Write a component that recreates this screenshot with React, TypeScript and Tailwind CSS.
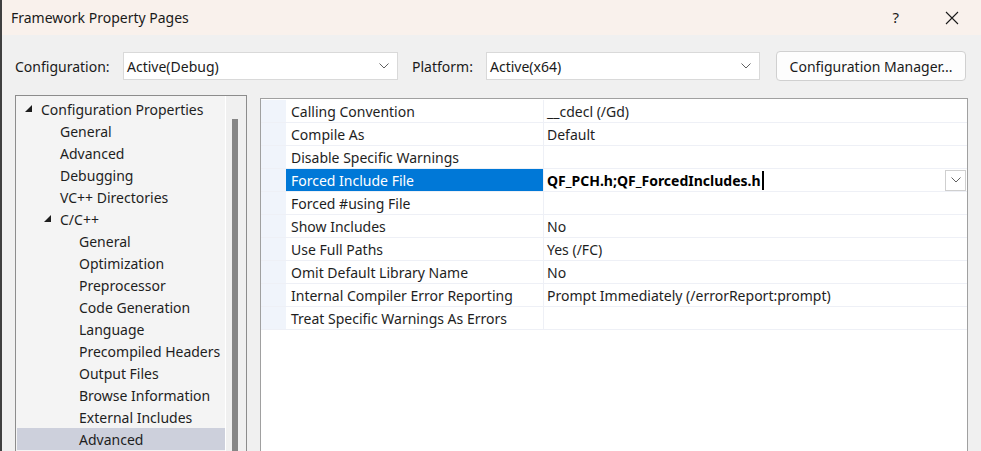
import React from 'react';

const font = { fontFamily: '"Noto Sans", "Segoe UI", sans-serif' };

interface TreeItem {
  label: string;
  level: number;
  expanded?: boolean;
  selected?: boolean;
}

const tree: TreeItem[] = [
  { label: 'Configuration Properties', level: 0, expanded: true },
  { label: 'General', level: 1 },
  { label: 'Advanced', level: 1 },
  { label: 'Debugging', level: 1 },
  { label: 'VC++ Directories', level: 1 },
  { label: 'C/C++', level: 1, expanded: true },
  { label: 'General', level: 2 },
  { label: 'Optimization', level: 2 },
  { label: 'Preprocessor', level: 2 },
  { label: 'Code Generation', level: 2 },
  { label: 'Language', level: 2 },
  { label: 'Precompiled Headers', level: 2 },
  { label: 'Output Files', level: 2 },
  { label: 'Browse Information', level: 2 },
  { label: 'External Includes', level: 2 },
  { label: 'Advanced', level: 2, selected: true },
];

const props: [string, string][] = [
  ['Calling Convention', '__cdecl (/Gd)'],
  ['Compile As', 'Default'],
  ['Disable Specific Warnings', ''],
  ['Forced Include File', 'QF_PCH.h;QF_ForcedIncludes.h'],
  ['Forced #using File', ''],
  ['Show Includes', 'No'],
  ['Use Full Paths', 'Yes (/FC)'],
  ['Omit Default Library Name', 'No'],
  ['Internal Compiler Error Reporting', 'Prompt Immediately (/errorReport:prompt)'],
  ['Treat Specific Warnings As Errors', ''],
];

function Chevron() {
  return (
    <svg width="10" height="6" viewBox="0 0 10 6">
      <path d="M0.5 0.5 L5 5 L9.5 0.5" fill="none" stroke="#606060" strokeWidth="1" />
    </svg>
  );
}

function Triangle() {
  return (
    <svg width="8" height="8" viewBox="0 0 8 8">
      <path d="M7 0 L7 7 L0 7 Z" fill="#1e1e1e" />
    </svg>
  );
}

function Combo({ value, width }: { value: string; width: string }) {
  return (
    <div
      className={`${width} h-[28px] bg-white border border-[#d9d9d9] flex items-center justify-between pl-[3px] pr-[8px] text-[14px] text-[#1a1a1a]`}
    >
      <span>{value}</span>
      <Chevron />
    </div>
  );
}

export default function App() {
  return (
    <div
      className="w-[981px] h-[451px] overflow-hidden bg-[#f0f0f0] border-l-2 border-[#404040] flex flex-col"
      style={font}
    >
      <div className="h-[35px] shrink-0 bg-[#f9f1ec] flex items-center pl-[9px] text-[14px] text-[#1a1a1a]">
        <span>Framework Property Pages</span>
        <span className="ml-auto mr-[46px] text-[15px]">?</span>
        <svg width="14" height="14" viewBox="0 0 14 14" className="mr-[22px]">
          <path d="M1 1 L13 13 M13 1 L1 13" stroke="#1a1a1a" strokeWidth="1.1" />
        </svg>
      </div>

      <div className="flex items-center mt-[16px] pl-[13px] h-[30px] shrink-0 text-[14px] text-[#1a1a1a]">
        <span className="w-[108px]">Configuration:</span>
        <Combo value="Active(Debug)" width="w-[275px]" />
        <span className="ml-[14px] w-[74px]">Platform:</span>
        <Combo value="Active(x64)" width="w-[274px]" />
        <button className="ml-[16px] w-[190px] h-[30px] bg-[#fdfdfd] border border-[#d0d0d0] rounded-[4px] text-[14px] text-[#1a1a1a]">
          Configuration Manager...
        </button>
      </div>

      <div className="flex flex-1 min-h-0">
        <div className="ml-[13px] mt-[14px] w-[232px] border-l border-t border-r border-[#8c8c8c] flex">
          <div className="w-[209px] bg-[#f4f4f4] pt-[2px] pl-[1px]">
            {tree.map((t, i) => (
              <div
                key={i}
                className={`h-[22px] flex items-center text-[14px] text-[#1e1e1e] ${t.selected ? 'bg-[#cdd0dc]' : ''}`}
                style={{ paddingLeft: 8 + t.level * 19 }}
              >
                <span className="w-[16px] shrink-0 flex items-center">{t.expanded ? <Triangle /> : null}</span>
                <span className="whitespace-nowrap">{t.label}</span>
              </div>
            ))}
          </div>
          <div className="flex-1 border-l border-white bg-[#f0f0f0] pt-[23px] pl-[6px]">
            <div className="w-[6px] h-full bg-[#868686]" />
          </div>
        </div>

        <div className="ml-[13px] mt-[17px] w-[708px] border-l border-t border-r border-[#a0a0a0] bg-white pt-[1px]">
          {props.map(([name, value], i) => {
            const sel = i === 3;
            return (
              <div key={i} className="h-[23px] flex border-b border-[#eef0f6] text-[14px]">
                <div className="w-[25px] shrink-0 bg-[#f0f4fb]" />
                <div
                  className={`w-[258px] shrink-0 border-r border-[#eef0f6] flex items-center pl-[5px] whitespace-nowrap ${
                    sel ? 'bg-[#0078d7] text-white' : 'text-[#1e1e1e]'
                  }`}
                >
                  {name}
                </div>
                <div className="flex-1 flex items-center pl-[3px] text-[#1e1e1e] whitespace-nowrap">
                  {sel ? (
                    <>
                      <span className="font-bold text-black">{value}</span>
                      <span className="w-[2px] h-[19px] bg-black ml-[1px]" />
                      <div className="ml-auto mr-[1px] w-[21px] h-[21px] bg-white border border-[#cfcfcf] flex items-center justify-center">
                        <Chevron />
                      </div>
                    </>
                  ) : (
                    value
                  )}
                </div>
              </div>
            );
          })}
        </div>
      </div>
    </div>
  );
}
